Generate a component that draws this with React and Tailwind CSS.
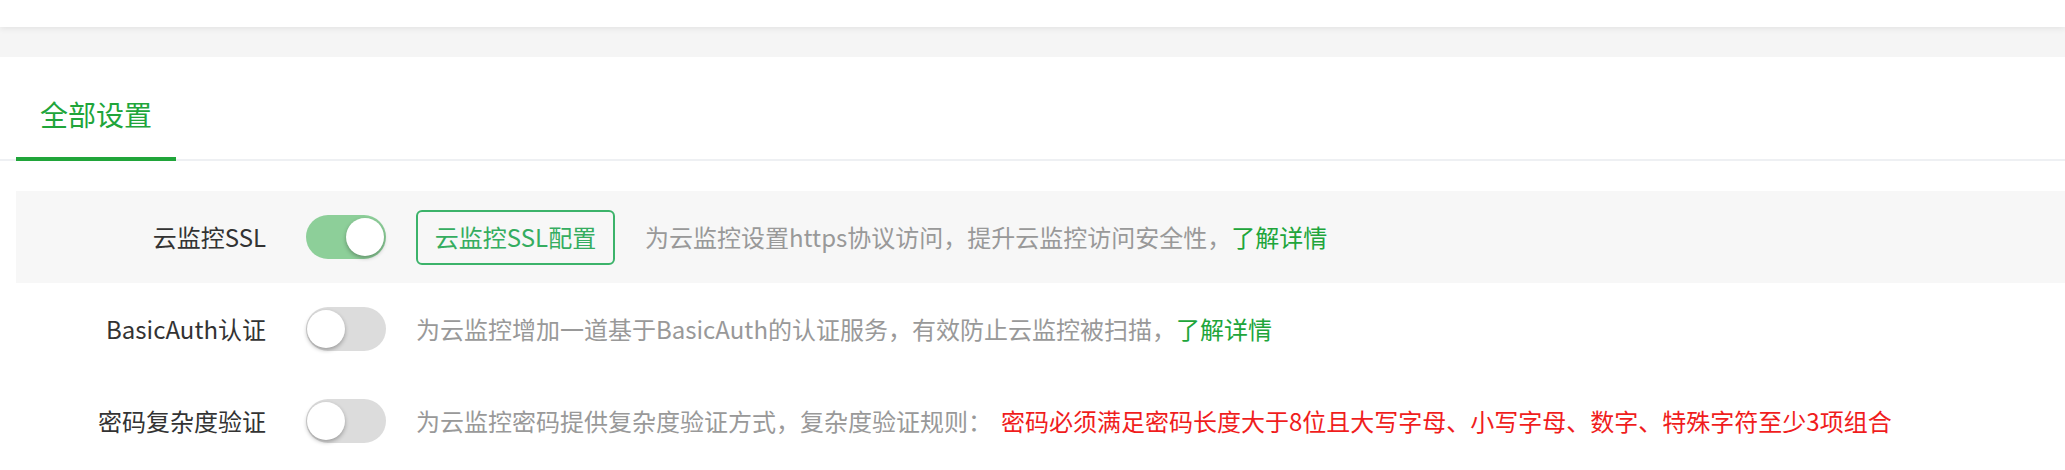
import React from 'react';

const font = { fontFamily: '"Noto Sans CJK SC", "Noto Sans", sans-serif' };

function Toggle({ on }) {
  return (
    <div
      className={`relative w-[80px] h-[44px] shrink-0 rounded-full ${on ? 'bg-[#8dcf99]' : 'bg-[#dcdcdc]'}`}
    >
      <div
        className={`absolute top-[3px] w-[38px] h-[38px] rounded-full bg-white shadow-[0_2px_4px_rgba(0,0,0,0.3)] ${on ? 'right-[2px]' : 'left-[1px]'}`}
      />
    </div>
  );
}

function Row({ label, on, shaded, children }) {
  return (
    <div className={`flex items-center h-[92px] ${shaded ? 'bg-[#f7f7f7]' : ''}`}>
      <div className="w-[250px] shrink-0 text-right text-[24px] text-[#333] leading-none">{label}</div>
      <div className="ml-[40px] flex items-center gap-[30px]">
        <Toggle on={on} />
        {children}
      </div>
    </div>
  );
}

export default function App() {
  return (
    <div className="w-full min-h-[470px] bg-white" style={font}>
      <div className="relative z-10 h-[27px] bg-white shadow-[0_2px_6px_rgba(0,0,0,0.07)]" />
      <div className="h-[30px] bg-[#f5f5f5]" />

      <div className="bg-white">
        <div className="flex border-b-2 border-[#eef0f3]">
          <div className="ml-4 mt-[14px] -mb-[2px] w-[160px] h-[90px] flex items-center justify-center border-b-4 border-[#20a53a] text-[28px] text-[#20a53a] leading-none">
            全部设置
          </div>
        </div>

        <div className="pl-4 pt-[30px]">
          <Row label="云监控SSL" on shaded>
            <button className="w-[199px] h-[55px] shrink-0 rounded-md border-2 border-[#3cb36a] text-[24px] text-[#35ad60] leading-none">
              云监控SSL配置
            </button>
            <div className="text-[24px] text-[#999] leading-none whitespace-nowrap">
              为云监控设置https协议访问，提升云监控访问安全性，<span className="text-[#20a53a]">了解详情</span>
            </div>
          </Row>
          <Row label="BasicAuth认证">
            <div className="text-[24px] text-[#999] leading-none whitespace-nowrap">
              为云监控增加一道基于BasicAuth的认证服务，有效防止云监控被扫描，<span className="text-[#20a53a]">了解详情</span>
            </div>
          </Row>
          <Row label="密码复杂度验证">
            <div className="text-[24px] text-[#999] leading-none whitespace-nowrap">
              为云监控密码提供复杂度验证方式，复杂度验证规则：
              <span className="ml-[9px] text-[#f01d1d]">密码必须满足密码长度大于8位且大写字母、小写字母、数字、特殊字符至少3项组合</span>
            </div>
          </Row>
        </div>
      </div>
    </div>
  );
}
